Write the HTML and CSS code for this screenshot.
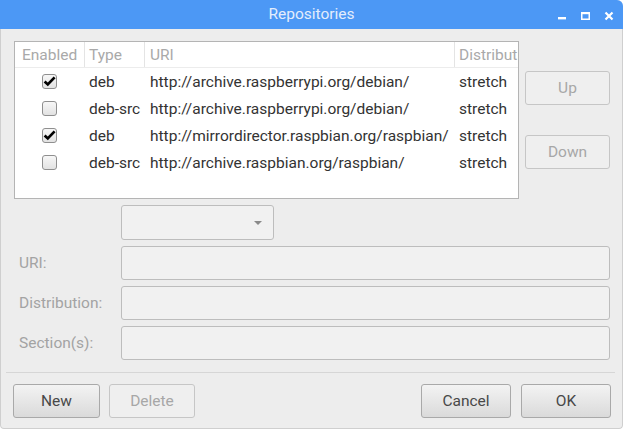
FILE: index.html
```html
<!DOCTYPE html>
<html>
<head>
<meta charset="utf-8">
<title>Repositories</title>
<link rel="stylesheet" href="styles.css">
</head>
<body>
<div class="window">
  <div class="titlebar">
    <span></span>
    <span class="title">Repositories</span>
    <div class="controls">
      <svg width="58" height="29" viewBox="0 0 58 29">
        <rect x="1" y="17" width="8" height="2.4" fill="#fff"/>
        <rect x="24.75" y="12.75" width="7.5" height="6.5" fill="none" stroke="#fff" stroke-width="1.5"/>
        <rect x="24" y="12" width="9" height="2.2" fill="#fff"/>
        <path d="M48.5 12.5 L55.5 19.5 M55.5 12.5 L48.5 19.5" stroke="#fff" stroke-width="2.2" fill="none"/>
      </svg>
    </div>
  </div>
  <div class="body">
    <div class="top">
      <div class="tree">
        <div class="trow head">
          <div class="c c-en">Enabled</div>
          <div class="c c-type">Type</div>
          <div class="c c-uri">URI</div>
          <div class="c c-dist">Distribution</div>
        </div>
        <div class="trow">
          <div class="c c-en"><span class="check on"><svg width="13" height="13" viewBox="0 0 13 13"><path d="M1.6 6.4 L4.8 9.4 L11.6 2.4" stroke="#000" stroke-width="2.7" fill="none"/></svg></span></div>
          <div class="c c-type">deb</div>
          <div class="c c-uri">http://archive.raspberrypi.org/debian/</div>
          <div class="c c-dist">stretch</div>
        </div>
        <div class="trow">
          <div class="c c-en"><span class="check"></span></div>
          <div class="c c-type">deb-src</div>
          <div class="c c-uri">http://archive.raspberrypi.org/debian/</div>
          <div class="c c-dist">stretch</div>
        </div>
        <div class="trow">
          <div class="c c-en"><span class="check on"><svg width="13" height="13" viewBox="0 0 13 13"><path d="M1.6 6.4 L4.8 9.4 L11.6 2.4" stroke="#000" stroke-width="2.7" fill="none"/></svg></span></div>
          <div class="c c-type">deb</div>
          <div class="c c-uri">http://mirrordirector.raspbian.org/raspbian/</div>
          <div class="c c-dist">stretch</div>
        </div>
        <div class="trow">
          <div class="c c-en"><span class="check"></span></div>
          <div class="c c-type">deb-src</div>
          <div class="c c-uri">http://archive.raspbian.org/raspbian/</div>
          <div class="c c-dist">stretch</div>
        </div>
      </div>
      <div class="side">
        <button class="btn disabled">Up</button>
        <button class="btn disabled">Down</button>
      </div>
    </div>
    <div class="form">
      <div class="frow">
        <span class="label"></span>
        <div class="combo"><span class="arrow"></span></div>
      </div>
      <div class="frow">
        <span class="label">URI:</span>
        <div class="entry"></div>
      </div>
      <div class="frow">
        <span class="label">Distribution:</span>
        <div class="entry"></div>
      </div>
      <div class="frow">
        <span class="label">Section(s):</span>
        <div class="entry"></div>
      </div>
    </div>
    <div class="sep"></div>
    <div class="actions">
      <button class="btn b-new">New</button>
      <button class="btn disabled b-del">Delete</button>
      <span class="spacer"></span>
      <button class="btn b-cancel">Cancel</button>
      <button class="btn b-ok">OK</button>
    </div>
  </div>
</div>
</body>
</html>
```
FILE: styles.css
```css
* { box-sizing: border-box; }
html, body { margin: 0; padding: 0; background: #ffffff; }
body { font-family: Roboto, "Liberation Sans", sans-serif; font-size: 15.5px; color: #333333; }

.window {
  width: 623px;
  height: 429px;
  display: flex;
  flex-direction: column;
  background: #ededed;
  border-radius: 0 6px 4px 4px;
  overflow: hidden;
}

.titlebar {
  height: 29px;
  flex: none;
  background: #4c98f5;
  display: grid;
  grid-template-columns: 1fr auto 1fr;
  align-items: center;
}
.title { color: #e3edfc; font-size: 15.5px; line-height: 29px; }
.controls { justify-self: end; margin-right: 8px; display: flex; }
.controls svg { display: block; }

.body {
  flex: 1;
  border: 1px solid #cfcfcf;
  border-top: none;
  border-radius: 0 0 4px 4px;
  padding: 12px 12px 10px 13px;
  display: flex;
  flex-direction: column;
}

.top { display: flex; gap: 6px; }
.tree {
  width: 505px;
  height: 158px;
  background: #ffffff;
  border: 1px solid #b4b4b4;
}
.trow {
  display: grid;
  grid-template-columns: 70px 60px 310px 63px;
  height: 27px;
  align-items: center;
  white-space: nowrap;
}
.trow.head { height: 26px; border-bottom: 1px solid #ececec; align-items: stretch; }
.head .c { color: #a9a9a9; display: flex; align-items: center; border-right: 1px solid #e4e4e4; }
.head .c-dist { border-right: none; }
.c { overflow: hidden; }
.c-en { padding-left: 7px; }
.c-type { padding-left: 4px; }
.c-uri { padding-left: 5px; }
.c-dist { padding-left: 4px; }
.trow:not(.head) .c-en { display: flex; justify-content: center; padding-left: 0; padding-right: 1px; }

.check {
  width: 15px;
  height: 15px;
  border: 1px solid #8f8f8f;
  border-radius: 3px;
  background: linear-gradient(#f7f7f7, #e2e2e2);
  display: flex;
  align-items: center;
  justify-content: center;
}
.check svg { display: block; }

.side {
  width: 85px;
  display: flex;
  flex-direction: column;
  gap: 30px;
  padding-top: 30px;
}

.btn {
  font-family: inherit;
  font-size: 15.5px;
  font-weight: 400;
  color: #484848;
  height: 34px;
  border: 1px solid #a9a9a9;
  border-radius: 3px;
  background: linear-gradient(#f3f3f3, #dadada);
  padding: 0;
}
.btn.disabled {
  color: #a7a7a7;
  background: #efefef;
  border-color: #c6c6c6;
}

.form { margin-top: 6px; display: flex; flex-direction: column; gap: 6px; }
.frow { display: flex; align-items: center; }
.label { width: 107px; padding-left: 5px; color: #a3a3a3; }
.combo {
  width: 153px;
  height: 35px;
  border: 1px solid #bdbdbd;
  border-radius: 3px;
  background: #f1f1f1;
  display: flex;
  align-items: center;
  justify-content: flex-end;
  padding-right: 11px;
}
.arrow {
  width: 0;
  height: 0;
  border-left: 4px solid transparent;
  border-right: 4px solid transparent;
  border-top: 4px solid #8a8a8a;
}
.entry {
  width: 489px;
  height: 34px;
  border: 1px solid #bdbdbd;
  border-radius: 3px;
  background: #f1f1f1;
}

.sep {
  height: 1px;
  background: #d6d6d6;
  margin: 12px -5px 0 -8px;
}

.actions { display: flex; margin: 11px -1px 0 -1px; }
.actions .spacer { flex: 1; }
.actions .btn { margin: 0; }
.b-new { width: 87px; }
.b-del { width: 86px; margin-left: 9px !important; }
.b-cancel { width: 90px; }
.b-ok { width: 90px; margin-left: 10px !important; }
```
